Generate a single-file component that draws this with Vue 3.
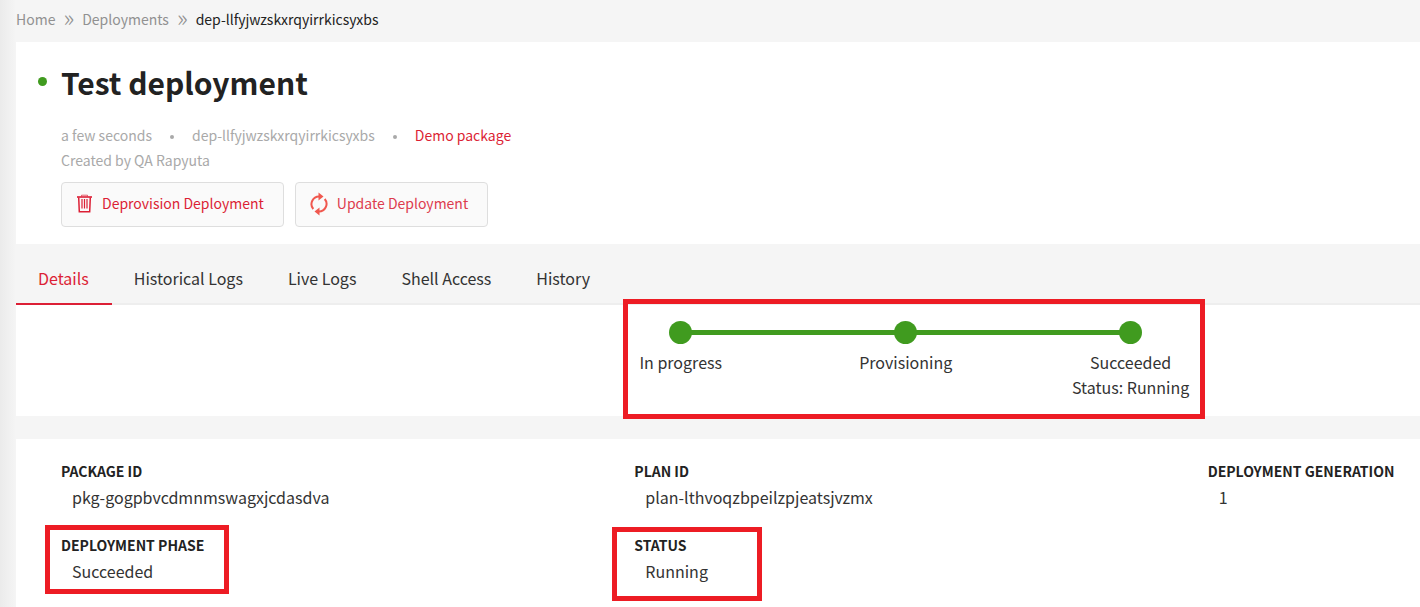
<script setup>
const tabs = ['Details', 'Historical Logs', 'Live Logs', 'Shell Access', 'History']
const steps = [
  { label: 'In progress' },
  { label: 'Provisioning' },
  { label: 'Succeeded', note: 'Status: Running' },
]
const fields = [
  { label: 'Package ID', value: 'pkg-gogpbvcdmnmswagxjcdasdva' },
  { label: 'Plan ID', value: 'plan-lthvoqzbpeilzpjeatsjvzmx' },
  { label: 'Deployment Generation', value: '1' },
  { label: 'Deployment Phase', value: 'Succeeded', mark: 'mark-phase' },
  { label: 'Status', value: 'Running', mark: 'mark-status' },
]
</script>

<template>
  <div class="page">
    <nav class="crumbs" aria-label="Breadcrumb">
      <a href="#">Home</a>
      <span class="sep">»</span>
      <a href="#">Deployments</a>
      <span class="sep">»</span>
      <span class="current">dep-llfyjwzskxrqyirrkicsyxbs</span>
    </nav>

    <header class="head">
      <div class="title-row">
        <span class="dot"></span>
        <h1>Test deployment</h1>
      </div>
      <div class="meta">
        <span>a few seconds</span>
        <span class="bullet"></span>
        <span>dep-llfyjwzskxrqyirrkicsyxbs</span>
        <span class="bullet"></span>
        <a href="#">Demo package</a>
      </div>
      <div class="meta">Created by QA Rapyuta</div>
      <div class="actions">
        <button type="button">
          <svg width="17" height="20" viewBox="0 0 17 20" fill="none" stroke="#dc1f35">
            <path d="M1 3h15" stroke-width="1.6" />
            <path d="M5.5 2.5V1.2h6v1.3" stroke-width="1" opacity=".7" />
            <path d="M2.700 3.500l.6 14.300h10.400l.6-14.300" stroke-width="1.500" />
            <path d="M6 5v9.500M8.500 5v9.500M11 5v9.500" stroke-width="1.200" />
          </svg>
          Deprovision Deployment
        </button>
        <button type="button" class="update">
          <svg width="18" height="24" viewBox="0 0 18 24" fill="none" stroke="#f0584f" stroke-width="2">
            <path d="M3.300 17A7.600 7.600 0 0 1 9.500 4.500" />
            <path d="M14.700 7A7.600 7.600 0 0 1 8.500 19.500" />
            <path d="M8.500 0.500l5 4-5 4zM9.500 15.500l-5 4 5 4z" fill="#f0584f" stroke="none" />
          </svg>
          Update Deployment
        </button>
      </div>
    </header>

    <nav class="tabs" aria-label="Deployment sections">
      <a v-for="(tab, i) in tabs" :key="tab" href="#" :class="{ active: i === 0 }">{{ tab }}</a>
    </nav>

    <section class="progress">
      <ol class="steps">
        <li v-for="step in steps" :key="step.label">
          <span class="node"></span>
          <span>{{ step.label }}</span>
          <span v-if="step.note">{{ step.note }}</span>
        </li>
      </ol>
    </section>

    <dl class="details">
      <div v-for="field in fields" :key="field.label" class="field" :class="field.mark">
        <dt>{{ field.label }}</dt>
        <dd>{{ field.value }}</dd>
      </div>
    </dl>
  </div>
</template>

<style>
body {
  margin: 0;
  background: #f5f5f5;
  overflow: hidden;
}
</style>

<style scoped>
.page {
  display: flex;
  flex-direction: column;
  min-height: 100vh;
  box-sizing: border-box;
  padding-left: 16px;
  background: linear-gradient(to right, #ebebeb, #f5f5f5 16px);
  color: #222;
  font-family: "Noto Sans CJK JP", "Noto Sans", sans-serif;
  font-size: 16px;
  line-height: 25px;
}
a {
  color: inherit;
  text-decoration: none;
}
.crumbs {
  display: flex;
  height: 42px;
  align-items: center;
  gap: 8px;
  box-sizing: border-box;
  padding-bottom: 3px;
  color: #919191;
  font-size: 14px;
}
.sep {
  padding-bottom: 6px;
  font-size: 24px;
  font-weight: 300;
}
.current {
  color: #222;
}
.head {
  padding: 18px 45px 17px;
  background: #fff;
}
.title-row {
  position: relative;
  display: flex;
}
.dot {
  position: absolute;
  left: -23px;
  top: 17px;
  width: 9px;
  height: 9px;
  border-radius: 50%;
  background: #409b1f;
}
h1 {
  margin: 0;
  font-size: 30px;
  line-height: 44px;
}
.meta {
  display: flex;
  align-items: center;
  color: #a9a9a9;
  font-size: 14px;
}
.title-row + .meta {
  margin-top: 19px;
}
.meta a {
  color: #dc1f35;
}
.bullet {
  width: 4px;
  height: 4px;
  margin: 2px 18px 0;
  border-radius: 50%;
  background: #a9a9a9;
}
.actions {
  display: flex;
  gap: 11px;
  margin-top: 9px;
}
button {
  display: flex;
  align-items: center;
  gap: 9px;
  height: 45px;
  padding: 0 19px 2px 14px;
  border: 1px solid #dedede;
  border-radius: 4px;
  background: #fafafa;
  color: #dc1f35;
  font: inherit;
  font-size: 14px;
}
.update {
  color: #dd3c4e;
}
.tabs {
  display: flex;
  height: 61px;
  box-sizing: border-box;
  border-bottom: 2px solid #eee;
  color: #333;
}
.tabs a {
  box-sizing: border-box;
  height: 61px;
  padding: 22px 23px 0 22px;
}
.tabs .active {
  border-bottom: 2px solid #dc1f35;
  color: #dc1f35;
}
.progress {
  display: flex;
  justify-content: flex-end;
  padding: 16px 12.6% 16px 0;
  background: #fff;
  color: #333;
}
.steps {
  position: relative;
  display: flex;
  width: 55%;
  margin: 0;
  padding: 0;
  list-style: none;
}
.steps::after {
  content: "";
  position: absolute;
  inset: -22px 38px -19px 55px;
  border: 5px solid #ed1c24;
}
.steps li {
  position: relative;
  display: flex;
  flex: 1;
  flex-direction: column;
  align-items: center;
}
.steps li + li::before {
  content: "";
  position: absolute;
  top: 9px;
  right: 50%;
  width: 100%;
  height: 5px;
  background: #409b1f;
}
.node {
  position: relative;
  width: 23px;
  height: 23px;
  margin-bottom: 6px;
  border-radius: 50%;
  background: #409b1f;
}
.details {
  display: grid;
  flex: 1;
  grid-template-columns: 27fr 27fr 10fr;
  align-content: start;
  row-gap: 22px;
  margin: 23px 0 0;
  padding: 20px 0 20px 45px;
  background: #fff;
}
.field {
  position: relative;
}
dt {
  font-size: 14px;
  font-weight: 700;
  line-height: 25px;
  text-transform: uppercase;
  white-space: nowrap;
}
dd {
  margin: 0 0 0 11px;
  color: #333;
  line-height: 27px;
}
.mark-phase::after,
.mark-status::after {
  content: "";
  position: absolute;
  box-sizing: border-box;
  border: 5px solid #ed1c24;
}
.mark-phase::after {
  left: -16px;
  top: -8px;
  width: 184px;
  height: 69px;
}
.mark-status::after {
  left: -22px;
  top: -6px;
  width: 150px;
  height: 74px;
}
</style>
